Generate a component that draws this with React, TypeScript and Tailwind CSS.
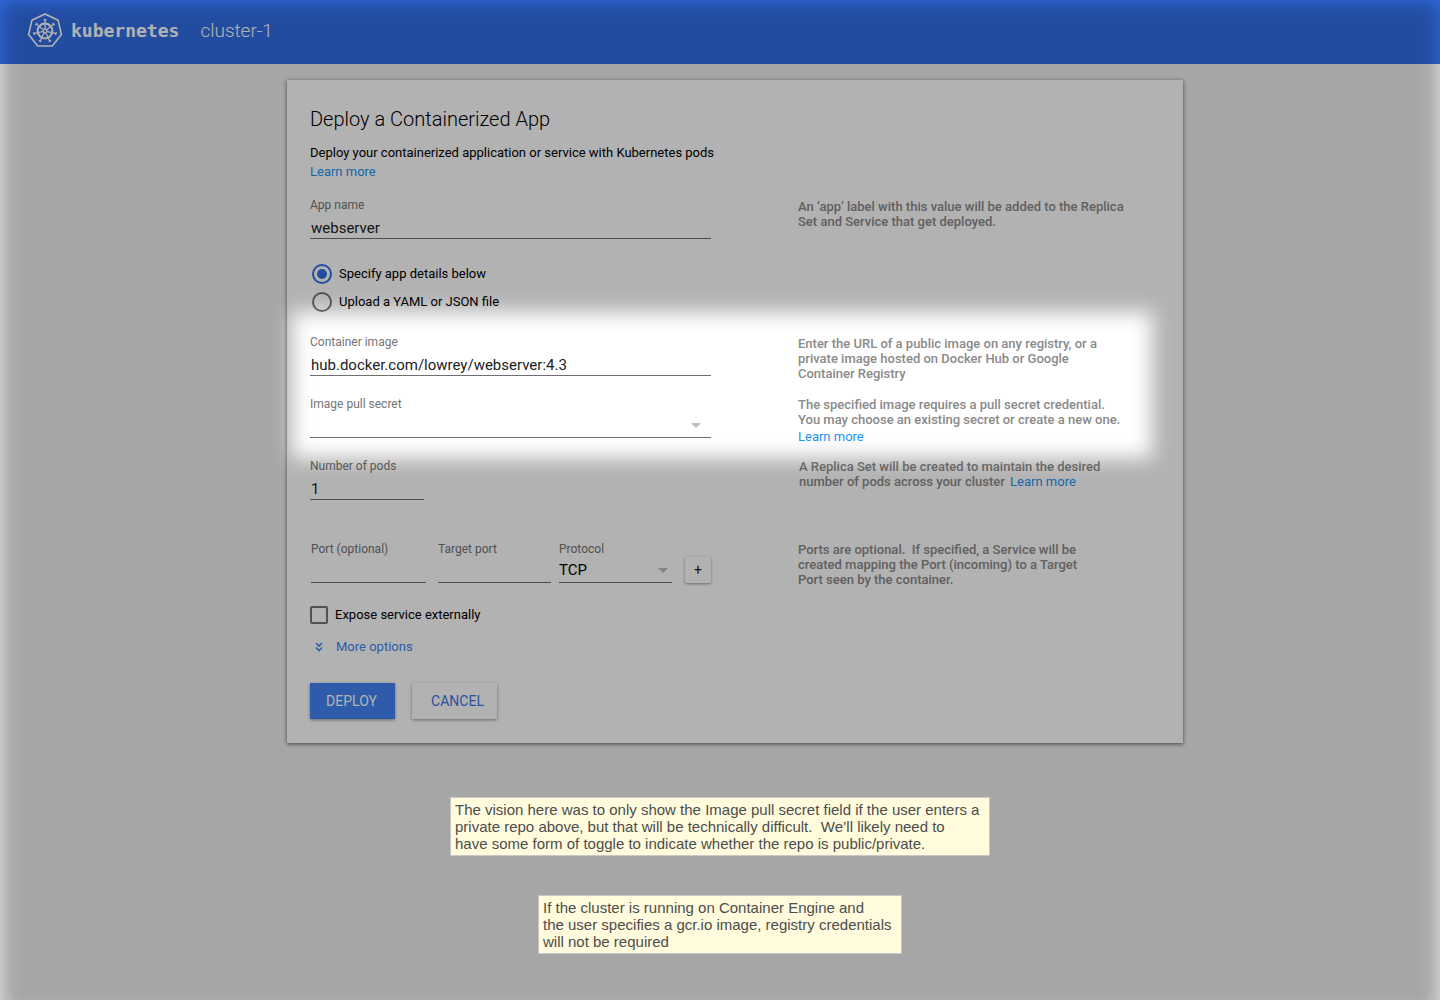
import type { InputHTMLAttributes, ReactNode } from 'react';

const HEPTAGON = Array.from({ length: 7 }, (_, i) => {
  const a = (i * 2 * Math.PI) / 7;
  return `${(18 + 16.8 * Math.sin(a)).toFixed(2)},${(18.8 - 16.8 * Math.cos(a)).toFixed(2)}`;
}).join(' ');

function Logo() {
  return (
    <svg viewBox="0 0 36 36" className="size-9 shrink-0" fill="none" stroke="currentColor" aria-hidden="true">
      <polygon points={HEPTAGON} strokeWidth="1.6" strokeLinejoin="round" />
      <circle cx="18" cy="19" r="7.4" strokeWidth="2" />
      {Array.from({ length: 7 }, (_, i) => (
        <g key={i} transform={`rotate(${(i * 360) / 7} 18 19)`}>
          <path d="M18 17.4V7.6" strokeWidth="1.3" />
          <path d="M17.2 7.8h1.6" strokeWidth="1.5" strokeLinecap="round" />
        </g>
      ))}
      <circle cx="18" cy="19" r="1.8" strokeWidth="1.3" />
    </svg>
  );
}

const LABEL = 'block text-xs leading-4 text-[#757575]';
const INPUT = 'block h-[26px] w-full border-b border-[#6f6f6f] bg-transparent px-px pt-1 text-[15px] text-[#212121] outline-none';

function TextField({ id, label, ...rest }: { id: string; label: string } & InputHTMLAttributes<HTMLInputElement>) {
  return (
    <div>
      <label htmlFor={id} className={LABEL}>{label}</label>
      <input id={id} className={INPUT} {...rest} />
    </div>
  );
}

function Select({ id, label, options, caret }: { id: string; label: string; options: string[]; caret: string }) {
  return (
    <div>
      <label htmlFor={id} className={LABEL}>{label}</label>
      <div className="relative">
        <select id={id} className="block h-[26px] w-full appearance-none border-b border-[#6f6f6f] bg-transparent pt-0.5 text-[15px] text-black outline-none">
          {options.map((o) => <option key={o}>{o}</option>)}
        </select>
        <span className={`pointer-events-none absolute bottom-2.5 border-x-5 border-t-5 border-x-transparent border-t-[#bdbdbd] ${caret}`} />
      </div>
    </div>
  );
}

function Row({ children, help, className }: { children: ReactNode; help: ReactNode; className: string }) {
  return (
    <div className={`grid grid-cols-[401px_340px] gap-x-[87px] ${className}`}>
      <div>{children}</div>
      <div className="text-[13px] leading-[15px] font-medium text-[#8a8a8a]">{help}</div>
    </div>
  );
}

function Learn({ className = '' }: { className?: string }) {
  return <a href="#learn" className={`text-[13px] font-normal text-[#2196f3] ${className}`}>Learn more</a>;
}

function Radio({ id, label, checked }: { id: string; label: string; checked?: boolean }) {
  return (
    <div className="flex h-7 items-center gap-[7px] pl-0.5">
      <input
        id={id}
        type="radio"
        name="source"
        defaultChecked={checked}
        className="size-5 appearance-none rounded-full border-2 border-[#757575] p-[3px] checked:border-[#326de6] checked:bg-[#326de6] checked:bg-clip-content"
      />
      <label htmlFor={id} className="text-[13px]">{label}</label>
    </div>
  );
}

function Dimmer() {
  return (
    <div className="pointer-events-none absolute inset-0 overflow-hidden">
      <div className="absolute inset-x-0 top-0 -bottom-4 overflow-hidden blur-[10px]">
        <div className="absolute top-[312px] left-1/2 -ml-[428px] h-[146px] w-[860px] shadow-[0_0_0_3000px_rgba(0,0,0,0.3)]" />
      </div>
    </div>
  );
}

export default function App() {
  return (
    <div className="relative flex min-h-screen flex-col overflow-hidden bg-[#eeeeee] font-['Roboto',sans-serif] text-black">
      <header className="flex h-16 items-start bg-[#326de6] pt-3 pl-[27px] text-white">
        <Logo />
        <span className="ml-2 font-['DejaVu_Sans_Mono',monospace] text-lg leading-[38px] font-bold">kubernetes</span>
        <span className="ml-[21px] text-[19px] leading-[38px] font-light">cluster-1</span>
      </header>

      <main className="pt-4 pl-[30px]">
        <form className="mx-auto max-w-4xl bg-white px-[23px] pt-6 pb-6 shadow-[0_1px_4px_rgba(0,0,0,0.6)]">
          <h1 className="text-xl leading-[30px] font-light">Deploy a Containerized App</h1>
          <p className="mt-[9px] text-[13px] leading-[19px]">Deploy your containerized application or service with Kubernetes pods</p>
          <Learn className="block leading-[19px]" />

          <Row className="mt-4" help={<p className="pt-0.5">An ‘app’ label with this value will be added to the Replica<br />Set and Service that get deployed.</p>}>
            <TextField id="app" label="App name" defaultValue="webserver" />
          </Row>

          <fieldset className="mt-[21px]">
            <Radio id="details" label="Specify app details below" checked />
            <Radio id="upload" label="Upload a YAML or JSON file" />
          </fieldset>

          <Row className="mt-[18px]" help={<p className="pt-0.5">Enter the URL of a public image on any registry, or a<br />private image hosted on Docker Hub or Google<br />Container Registry</p>}>
            <TextField id="image" label="Container image" defaultValue="hub.docker.com/lowrey/webserver:4.3" />
          </Row>

          <Row className="mt-[15px]" help={<><p className="pt-px">The specified image requires a pull secret credential.<br />You may choose an existing secret or create a new one.</p><Learn className="block leading-[19px]" /></>}>
            <Select id="secret" label="Image pull secret" options={['']} caret="right-2.5" />
          </Row>

          <Row className="mt-3" help={<p className="pt-px pl-px">A Replica Set will be created to maintain the desired<br />number of pods across your cluster <Learn className="ml-0.5" /></p>}>
            <div className="w-[114px]"><TextField id="pods" label="Number of pods" defaultValue="1" /></div>
          </Row>

          <Row className="mt-[41px]" help={<p className="pt-px">Ports are optional.&nbsp; If specified, a Service will be<br />created mapping the Port (incoming) to a Target<br />Port seen by the container.</p>}>
            <div className="flex items-end pl-px">
              <div className="w-[115px]"><TextField id="port" label="Port (optional)" /></div>
              <div className="ml-3 w-[113px]"><TextField id="target" label="Target port" /></div>
              <div className="ml-2 w-[113px]"><Select id="protocol" label="Protocol" options={['TCP']} caret="right-1" /></div>
              <button type="button" aria-label="Add port" className="ml-auto size-[26px] rounded-xs bg-white text-sm text-[#212121] shadow-[0_1px_3px_rgba(0,0,0,0.4)]">+</button>
            </div>
          </Row>

          <div className="mt-[18px] flex items-center gap-[7px]">
            <input id="expose" type="checkbox" className="size-[18px] appearance-none rounded-xs border-2 border-[#757575]" />
            <label htmlFor="expose" className="text-[13px] leading-5">Expose service externally</label>
          </div>

          <button type="button" className="mt-3 flex h-5 items-center text-[13px] text-[#4285f4]">
            <svg viewBox="0 0 8 10" className="ml-[5px] h-2.5 w-2" fill="none" stroke="currentColor" strokeWidth="1.6" aria-hidden="true">
              <path d="M1 1l3 3 3-3M1 5.5l3 3 3-3" />
            </svg>
            <span className="ml-[13px]">More options</span>
          </button>

          <div className="mt-[26px] flex gap-[17px]">
            <button type="submit" className="h-9 w-[85px] bg-[#4285f4] pr-0.5 text-sm text-white shadow-[0_1px_3px_rgba(0,0,0,0.4)]">DEPLOY</button>
            <button type="button" className="h-9 w-[85px] bg-white pl-1.5 text-sm text-[#3b78e7] shadow-[0_1px_3px_rgba(0,0,0,0.4)]">CANCEL</button>
          </div>
        </form>
      </main>

      <Dimmer />

      <aside className="relative mt-[54px] flex flex-col items-center gap-[39px] pb-[46px] font-['Liberation_Sans',sans-serif] text-[15px] leading-[17px] text-[#4d4d4d]">
        <p className="w-[540px] border border-[#c8c8c4] bg-[#fffbdc] px-1 py-[3px]">
          The vision here was to only show the Image pull secret field if the user enters a<br />
          private repo above, but that will be technically difficult.&nbsp; We’ll likely need to<br />
          have some form of toggle to indicate whether the repo is public/private.
        </p>
        <p className="w-[364px] border border-[#c8c8c4] bg-[#fffbdc] px-1 py-[3px]">
          If the cluster is running on Container Engine and<br />
          the user specifies a gcr.io image, registry credentials<br />
          will not be required
        </p>
      </aside>
    </div>
  );
}
